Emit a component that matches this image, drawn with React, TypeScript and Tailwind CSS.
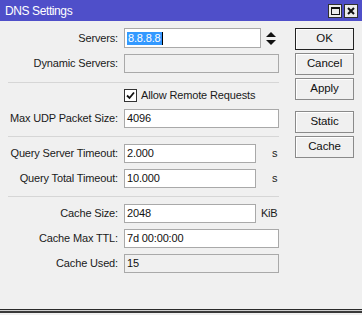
import React from "react";

const font = { fontFamily: '"Liberation Sans", Arial, sans-serif' };

function Label({ children }: { children: React.ReactNode }) {
  return (
    <div className="w-[124px] shrink-0 text-right pr-[6px] text-[11px] tracking-[-0.15px] text-[#1a1a1a] leading-none">
      {children}
    </div>
  );
}

function Input({ value, w, disabled }: { value?: string; w: string; disabled?: boolean }) {
  return (
    <div
      className={`${w} h-[19px] border border-[#a9a9a9] flex items-center pl-[2px] text-[11px] tracking-[-0.15px] text-[#111] leading-none ${
        disabled ? "bg-[#f0f0f0]" : "bg-white"
      }`}
    >
      {value}
    </div>
  );
}

function Sep() {
  return <div className="ml-[8px] h-px bg-[#d6d6d6]" />;
}

function Btn({ children, primary, className = "" }: { children: React.ReactNode; primary?: boolean; className?: string }) {
  return (
    <div
      className={`w-[59px] h-[22px] flex items-center justify-center text-[11.5px] tracking-[-0.1px] text-[#111] bg-[#f0f0f0] border shadow-[inset_1px_1px_0_#ffffff] ${
        primary ? "border-[#222]" : "border-[#8a8a8a]"
      } ${className}`}
    >
      {children}
    </div>
  );
}

export default function App() {
  return (
    <div className="w-[362px] h-[315px] bg-[#f0f0f0] flex flex-col overflow-hidden" style={font}>
      {/* Title bar */}
      <div className="h-[21px] bg-[#4f4fc9] flex items-center pl-[5px] pr-[4px] shrink-0">
        <div className="text-white text-[12px] tracking-[-0.4px] leading-none flex-1">DNS Settings</div>
        <div className="flex gap-[2px]">
          <div className="w-[14px] h-[14px] bg-[#ececec] border border-[#303030] flex items-center justify-center">
            <div className="w-[9px] h-[8px] border border-[#111] border-t-2" />
          </div>
          <div className="w-[14px] h-[14px] bg-[#ececec] border border-[#303030] flex items-center justify-center">
            <svg width="8" height="8" viewBox="0 0 8 8">
              <path d="M1 1 L7 7 M7 1 L1 7" stroke="#111" strokeWidth="2" />
            </svg>
          </div>
        </div>
      </div>

      {/* Body */}
      <div className="flex-1 flex pt-[7px]">
        <div className="w-[279px] flex flex-col">
          <div className="flex items-center h-[20px]">
            <Label>Servers:</Label>
            <div className="w-[137px] h-[20px] bg-white border border-[#a9a9a9] flex items-center pl-[2px]">
              <span className="bg-[#3399ff] text-white text-[11px] tracking-[-0.15px] leading-[13px] px-[1px]">8.8.8.8</span>
              <span className="w-px h-[13px] bg-black" />
            </div>
            <svg className="ml-[5px]" width="10" height="13" viewBox="0 0 10 13">
              <path d="M5 0 L10 5 L0 5 Z" fill="#111" />
              <path d="M0 8 L10 8 L5 13 Z" fill="#111" />
            </svg>
          </div>

          <div className="flex items-center h-[19px] mt-[6px]">
            <Label>Dynamic Servers:</Label>
            <Input w="w-[155px]" disabled />
          </div>

          <div className="mt-[9px]">
            <Sep />
          </div>

          <div className="flex items-center h-[13px] mt-[6px] pl-[124px]">
            <div className="w-[13px] h-[13px] bg-white border border-[#333] flex items-center justify-center">
              <svg width="9" height="9" viewBox="0 0 9 9">
                <path d="M1 4.5 L3.5 7 L8 1.5" stroke="#111" strokeWidth="1.8" fill="none" />
              </svg>
            </div>
            <span className="ml-[4px] text-[11px] tracking-[-0.15px] text-[#1a1a1a] leading-none">Allow Remote Requests</span>
          </div>

          <div className="flex items-center h-[19px] mt-[7px]">
            <Label>Max UDP Packet Size:</Label>
            <Input w="w-[155px]" value="4096" />
          </div>

          <div className="mt-[8px]">
            <Sep />
          </div>

          <div className="flex items-center h-[19px] mt-[7px]">
            <Label>Query Server Timeout:</Label>
            <Input w="w-[132px]" value="2.000" />
            <span className="ml-[16px] text-[11px] text-[#1a1a1a] leading-none">s</span>
          </div>

          <div className="flex items-center h-[19px] mt-[6px]">
            <Label>Query Total Timeout:</Label>
            <Input w="w-[132px]" value="10.000" />
            <span className="ml-[16px] text-[11px] text-[#1a1a1a] leading-none">s</span>
          </div>

          <div className="mt-[8px]">
            <Sep />
          </div>

          <div className="flex items-center h-[19px] mt-[7px]">
            <Label>Cache Size:</Label>
            <Input w="w-[132px]" value="2048" />
            <span className="ml-[5px] text-[11px] tracking-[-0.3px] text-[#1a1a1a] leading-none">KiB</span>
          </div>

          <div className="flex items-center h-[19px] mt-[6px]">
            <Label>Cache Max TTL:</Label>
            <Input w="w-[155px]" value="7d 00:00:00" />
          </div>

          <div className="flex items-center h-[19px] mt-[6px]">
            <Label>Cache Used:</Label>
            <Input w="w-[155px]" value="15" disabled />
          </div>
        </div>

        <div className="ml-[16px] flex flex-col gap-[3px]">
          <Btn primary>OK</Btn>
          <Btn>Cancel</Btn>
          <Btn>Apply</Btn>
          <Btn className="mt-[8px]">Static</Btn>
          <Btn>Cache</Btn>
        </div>
      </div>

      {/* Bottom border */}
      <div className="shrink-0 mb-[2px]">
        <div className="h-px bg-[#2a2a2a]" />
        <div className="h-px bg-[#cfcfcf]" />
        <div className="h-[2px] bg-[#3a3a3a]" />
      </div>
    </div>
  );
}
